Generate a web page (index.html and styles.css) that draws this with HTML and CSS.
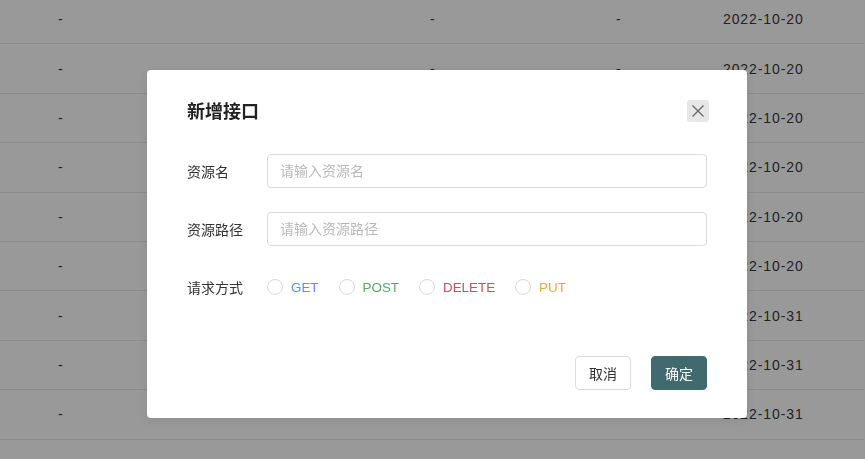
FILE: index.html
```html
<!DOCTYPE html>
<html lang="zh-CN">
<head>
<meta charset="utf-8">
<title>新增接口</title>
<link rel="stylesheet" href="styles.css">
</head>
<body>
<div class="table">
  <div class="row"><span>-</span><span>-</span><span>-</span><span class="date">2022-10-20</span></div>
  <div class="row"><span>-</span><span>-</span><span>-</span><span class="date">2022-10-20</span></div>
  <div class="row"><span>-</span><span>-</span><span>-</span><span class="date">2022-10-20</span></div>
  <div class="row"><span>-</span><span>-</span><span>-</span><span class="date">2022-10-20</span></div>
  <div class="row"><span>-</span><span>-</span><span>-</span><span class="date">2022-10-20</span></div>
  <div class="row"><span>-</span><span>-</span><span>-</span><span class="date">2022-10-20</span></div>
  <div class="row"><span>-</span><span>-</span><span>-</span><span class="date">2022-10-31</span></div>
  <div class="row"><span>-</span><span>-</span><span>-</span><span class="date">2022-10-31</span></div>
  <div class="row"><span>-</span><span>-</span><span>-</span><span class="date">2022-10-31</span></div>
  <div class="row"><span></span><span></span><span></span><span class="date">2022-10-31</span></div>
</div>
<div class="mask"></div>
<div class="modal">
  <div class="modal-header">
    <h2 class="modal-title">新增接口</h2>
    <button class="close-btn" type="button" aria-label="关闭">
      <svg width="14" height="14" viewBox="0 0 14 14"><path d="M1.5 1.5 L12.5 12.5 M12.5 1.5 L1.5 12.5" stroke="#6b6b6b" stroke-width="1.4" fill="none"/></svg>
    </button>
  </div>
  <div class="form">
    <div class="form-row">
      <label class="form-label">资源名</label>
      <input class="input" type="text" placeholder="请输入资源名">
    </div>
    <div class="form-row">
      <label class="form-label">资源路径</label>
      <input class="input" type="text" placeholder="请输入资源路径">
    </div>
    <div class="form-row">
      <label class="form-label">请求方式</label>
      <div class="radios">
        <label class="radio"><span class="circle"></span><span class="m-get">GET</span></label>
        <label class="radio"><span class="circle"></span><span class="m-post">POST</span></label>
        <label class="radio"><span class="circle"></span><span class="m-delete">DELETE</span></label>
        <label class="radio"><span class="circle"></span><span class="m-put">PUT</span></label>
      </div>
    </div>
  </div>
  <div class="modal-footer">
    <button class="btn btn-default" type="button">取消</button>
    <button class="btn btn-primary" type="button">确定</button>
  </div>
</div>
</body>
</html>
```
FILE: styles.css
```css
* { box-sizing: border-box; }
html, body { margin: 0; padding: 0; }
body {
  background: #fff;
  font-family: "Liberation Sans", "Noto Sans CJK SC", sans-serif;
  font-size: 14px;
  color: #333;
  overflow: hidden;
  height: 459px;
}
.table { margin-top: -5px; }
.row {
  display: grid;
  grid-template-columns: 372px 186px 107px 1fr;
  padding-left: 58px;
  height: 49.4px;
  align-items: center;
  border-bottom: 1px solid #ececec;
  color: #3a3a3a;
}
.date { letter-spacing: 0.9px; }
.mask {
  position: fixed;
  inset: 0;
  background: rgba(0, 0, 0, 0.4);
}
.modal {
  position: absolute;
  left: 147px;
  top: 70px;
  width: 600px;
  height: 348px;
  background: #fff;
  border-radius: 4px;
  padding: 30px 40px 28px;
  display: flex;
  flex-direction: column;
  box-shadow: 0 2px 10px rgba(0, 0, 0, 0.08);
}
.modal-header {
  display: flex;
  align-items: center;
  justify-content: space-between;
  height: 22px;
  margin-right: -2px;
}
.modal-title {
  margin: 0 0 2px;
  font-size: 18px;
  font-weight: 600;
  color: #222;
}
.close-btn {
  width: 22px;
  height: 22px;
  padding: 0;
  border: none;
  border-radius: 3px;
  background: #e7e7e7;
  display: flex;
  align-items: center;
  justify-content: center;
}
.form {
  display: flex;
  flex-direction: column;
  gap: 24px;
  margin-top: 32px;
}
.form-row {
  display: flex;
  align-items: center;
  height: 34px;
}
.form-label {
  width: 80px;
  flex: none;
  color: #333;
}
.input {
  flex: 1;
  height: 34px;
  border: 1px solid #dcdcdc;
  border-radius: 4px;
  padding: 0 12px;
  font: inherit;
  color: #333;
  outline: none;
}
.input::placeholder { color: #b9b9b9; }
.radios {
  display: flex;
  align-items: center;
  gap: 20px;
}
.radio {
  display: flex;
  align-items: center;
  gap: 8px;
  font-size: 13.4px;
}
.circle {
  width: 16px;
  height: 16px;
  border: 1px solid #dadada;
  border-radius: 50%;
}
.m-get { color: #5b8ff0; }
.m-post { color: #55a868; }
.m-delete { color: #d04a62; }
.m-put { color: #eba64b; }
.modal-footer {
  margin-top: auto;
  display: flex;
  justify-content: flex-end;
  gap: 20px;
}
.btn {
  width: 56px;
  height: 34px;
  border-radius: 4px;
  font: inherit;
  font-size: 14px;
  padding: 0;
}
.btn-default {
  background: #fff;
  border: 1px solid #dcdcdc;
  color: #333;
}
.btn-primary {
  background: #416a6f;
  border: 1px solid #416a6f;
  color: #fff;
}
```
